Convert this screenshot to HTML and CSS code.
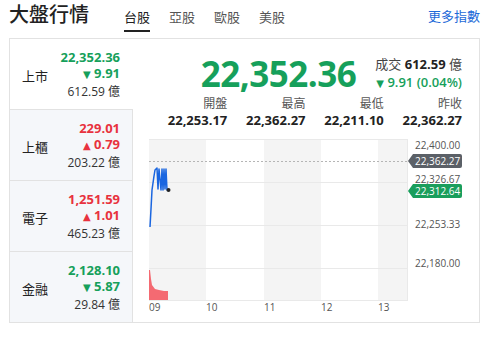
FILE: index.html
```html
<!DOCTYPE html>
<html lang="zh-Hant">
<head>
    <meta charset="UTF-8">
    <title>大盤行情</title>
    <link rel="stylesheet" href="styles.css">
</head>
<body>

    <div class="header">
        <h1 class="title">大盤行情</h1>
        <div class="tabs">
            <span class="tab active">台股</span>
            <span class="tab">亞股</span>
            <span class="tab">歐股</span>
            <span class="tab">美股</span>
        </div>
        <a class="more" href="#">更多指數</a>
    </div>

    <div class="card">
        <!-- Liste des indices -->
        <div class="side">
            <div class="row active">
                <span class="name">上市</span>
                <div class="nums">
                    <div class="price down">22,352.36</div>
                    <div class="change down"><span class="arrow">▼</span> 9.91</div>
                    <div class="vol">612.59 億</div>
                </div>
            </div>
            <div class="row">
                <span class="name">上櫃</span>
                <div class="nums">
                    <div class="price up">229.01</div>
                    <div class="change up"><span class="arrow">▲</span> 0.79</div>
                    <div class="vol">203.22 億</div>
                </div>
            </div>
            <div class="row">
                <span class="name">電子</span>
                <div class="nums">
                    <div class="price up">1,251.59</div>
                    <div class="change up"><span class="arrow">▲</span> 1.01</div>
                    <div class="vol">465.23 億</div>
                </div>
            </div>
            <div class="row">
                <span class="name">金融</span>
                <div class="nums">
                    <div class="price down">2,128.10</div>
                    <div class="change down"><span class="arrow">▼</span> 5.87</div>
                    <div class="vol">29.84 億</div>
                </div>
            </div>
        </div>

        <!-- Détail de l'indice -->
        <div class="main">
            <div class="quote">
                <div class="big down">22,352.36</div>
                <div class="quote-side">
                    <div class="turnover">成交 <b>612.59</b> 億</div>
                    <div class="quote-change down"><span class="arrow">▼</span> 9.91 (0.04%)</div>
                </div>
            </div>

            <div class="stats">
                <div class="stat"><div class="stat-label">開盤</div><div class="stat-value">22,253.17</div></div>
                <div class="stat"><div class="stat-label">最高</div><div class="stat-value">22,362.27</div></div>
                <div class="stat"><div class="stat-label">最低</div><div class="stat-value">22,211.10</div></div>
                <div class="stat"><div class="stat-label">昨收</div><div class="stat-value">22,362.27</div></div>
            </div>

            <svg class="chart" width="314" height="176" viewBox="0 0 314 176">
                <!-- bandes horaires -->
                <rect x="0" y="0" width="57" height="161" fill="#f4f4f4"/>
                <rect x="115" y="0" width="57" height="161" fill="#f4f4f4"/>
                <rect x="229" y="0" width="29" height="161" fill="#f4f4f4"/>
                <g stroke="#e9e9e9" stroke-width="1">
                    <line x1="0" y1="0.5" x2="258" y2="0.5"/>
                    <line x1="0" y1="43.5" x2="258" y2="43.5"/>
                    <line x1="0" y1="86.5" x2="258" y2="86.5"/>
                    <line x1="0" y1="129.5" x2="258" y2="129.5"/>
                    <line x1="0" y1="161.5" x2="258" y2="161.5"/>
                    <line x1="258.5" y1="0" x2="258.5" y2="162"/>
                </g>
                <line x1="0" y1="22.5" x2="258" y2="22.5" stroke="#b5b5b5" stroke-dasharray="2,2"/>

                <!-- volume -->
                <path d="M0 161 L0 131 L1 131 L2 140 L3 146 L6 150 L10 151 L15 152 L19 152 L19 161 Z" fill="#f46a72"/>

                <!-- courbe -->
                <polyline points="1,88 2,70 3,51 5,37 6,31 8,29 9,50 10,30 12,51 13,30 14,51 15,30 16,50 17,30 18,51 19,51"
                          fill="none" stroke="#1a66e0" stroke-width="1.5" stroke-linejoin="round"/>
                <circle cx="19.5" cy="51" r="2" fill="#222"/>

                <!-- axe Y -->
                <g class="axis">
                    <text x="266" y="10">22,400.00</text>
                    <text x="266" y="44">22,326.67</text>
                    <text x="266" y="89">22,253.33</text>
                    <text x="266" y="128">22,180.00</text>
                </g>

                <!-- étiquettes -->
                <path d="M259 22 L264 15 L311 15 Q313 15 313 17 L313 27 Q313 29 311 29 L264 29 Z" fill="#5b6067"/>
                <text class="tag" x="266" y="26">22,362.27</text>
                <path d="M259 52 L264 45 L311 45 Q313 45 313 47 L313 57 Q313 59 311 59 L264 59 Z" fill="#1a9e5c"/>
                <text class="tag" x="266" y="56">22,312.64</text>

                <!-- axe X -->
                <g class="axis">
                    <text x="0" y="172">09</text>
                    <text x="57" y="172">10</text>
                    <text x="115" y="172">11</text>
                    <text x="172" y="172">12</text>
                    <text x="229" y="172">13</text>
                </g>
            </svg>
        </div>
    </div>

</body>
</html>
```

FILE: styles.css
```css
body {
    margin: 0;
    padding: 0 9px;
    font-family: 'Open Sans', 'Noto Sans CJK TC', sans-serif;
    color: #222;
    background-color: white;
}

.header {
    display: flex;
    align-items: flex-end;
    height: 32px;
    margin-bottom: 6px;
}

.title {
    margin: 0 35px 3px 0;
    font-size: 20px;
    font-weight: 500;
    line-height: 28px;
}

.tabs {
    display: flex;
    gap: 19px;
}

.tab {
    font-size: 13px;
    line-height: 18px;
    color: #555;
    padding-bottom: 4px;
    border-bottom: 2px solid transparent;
}

.tab.active {
    color: #222;
    border-bottom-color: #222;
}

.more {
    margin-left: auto;
    margin-bottom: 7px;
    font-size: 13px;
    line-height: 18px;
    color: #1d6ad8;
    text-decoration: none;
}

.card {
    display: flex;
    height: 283px;
    border: 1px solid #e2e2e2;
}

.side {
    flex: 0 0 123px;
    display: flex;
    flex-direction: column;
}

.row {
    flex: 1;
    display: flex;
    align-items: center;
    justify-content: space-between;
    padding: 0 12px 0 12px;
    background-color: #f5f7fa;
    border-right: 1px solid #e2e2e2;
    border-top: 1px solid #e2e2e2;
}

.row:first-child {
    border-top: none;
}

.row.active {
    background-color: white;
    border-right-color: transparent;
}

.name {
    font-size: 13px;
    padding-top: 2px;
}

.nums {
    text-align: right;
}

.price,
.change {
    font-size: 13px;
    font-weight: 700;
    line-height: 16px;
}

.vol {
    font-size: 12px;
    line-height: 17px;
    color: #333;
}

.arrow {
    font-family: 'DejaVu Sans', sans-serif;
    font-size: 10px;
}

.up {
    color: #e8323e;
}

.down {
    color: #16a05b;
}

.main {
    flex: 1;
    min-width: 0;
    padding: 14px 16px 0 16px;
}

.quote {
    display: flex;
    justify-content: flex-end;
    align-items: center;
    gap: 19px;
    height: 42px;
    padding-right: 1px;
}

.big {
    font-size: 35px;
    font-weight: 700;
    letter-spacing: -0.5px;
    line-height: 40px;
}

.quote-side {
    text-align: right;
    font-size: 13px;
    line-height: 18px;
}

.turnover {
    color: #444;
}

.turnover b {
    color: #222;
}

.quote-change {
    font-weight: 600;
}

.stats {
    display: grid;
    grid-template-columns: repeat(4, 1fr);
    margin-top: 1px;
    padding-right: 1px;
    text-align: right;
}

.stat-label {
    font-size: 12px;
    line-height: 16px;
    color: #555;
}

.stat-value {
    font-size: 13px;
    font-weight: 700;
    line-height: 16px;
}

.chart {
    display: block;
    margin-top: 11px;
    font-family: 'Open Sans', sans-serif;
}

.axis text {
    font-size: 10px;
    fill: #555;
}

.tag {
    font-size: 10px;
    fill: white;
}
```
